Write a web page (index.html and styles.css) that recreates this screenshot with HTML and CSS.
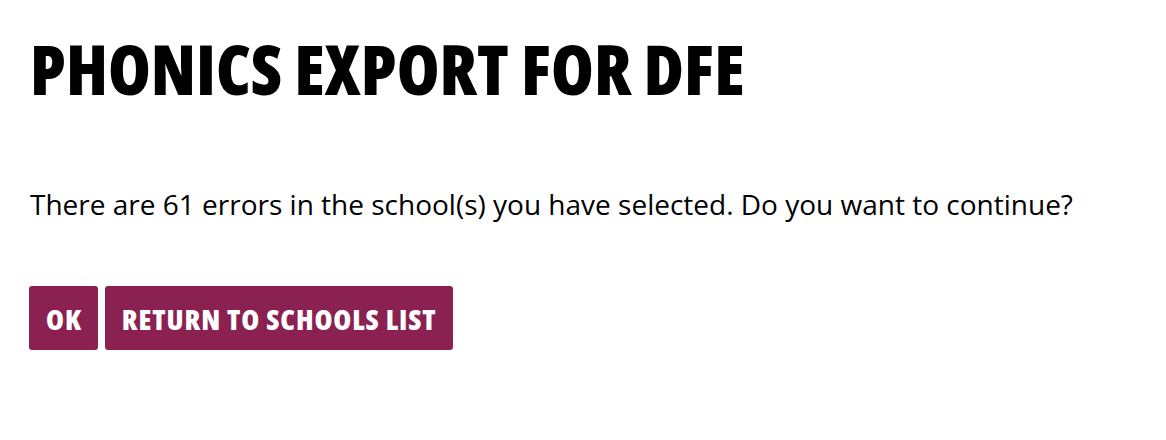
FILE: index.html
```html
<!DOCTYPE html>
<html>
<head>
<meta charset="utf-8">
<link rel="stylesheet" href="styles.css">
</head>
<body>
<main class="page">
  <h1 class="title">PHONICS EXPORT FOR DFE</h1>
  <p class="message">There are 61 errors in the school(s) you have selected. Do you want to continue?</p>
  <div class="actions">
    <button class="btn">OK</button>
    <button class="btn">RETURN TO SCHOOLS LIST</button>
  </div>
</main>
</body>
</html>
```

FILE: styles.css
```css
html, body { margin: 0; padding: 0; background: #fff; }
.page {
  padding: 24px 29px;
  font-family: "Open Sans", "Noto Sans", sans-serif;
  color: #000;
}
.title {
  margin: 0 0 0 1px;
  font-family: "Open Sans", sans-serif;
  font-stretch: 75%;
  font-weight: 800;
  font-size: 69px;
  line-height: 88px;
}
.message {
  margin: 73px 0 0 1px;
  font-size: 28px;
  line-height: 38px;
}
.actions {
  display: flex;
  gap: 7px;
  margin-top: 63px;
}
.btn {
  background: #8b2150;
  color: #fff;
  border: none;
  border-radius: 3px;
  height: 64px;
  padding: 0 16px 0 17px;
  font-family: "Open Sans", sans-serif;
  font-stretch: 75%;
  font-weight: 800;
  font-size: 29px;
  letter-spacing: 0.9px;
}
```
